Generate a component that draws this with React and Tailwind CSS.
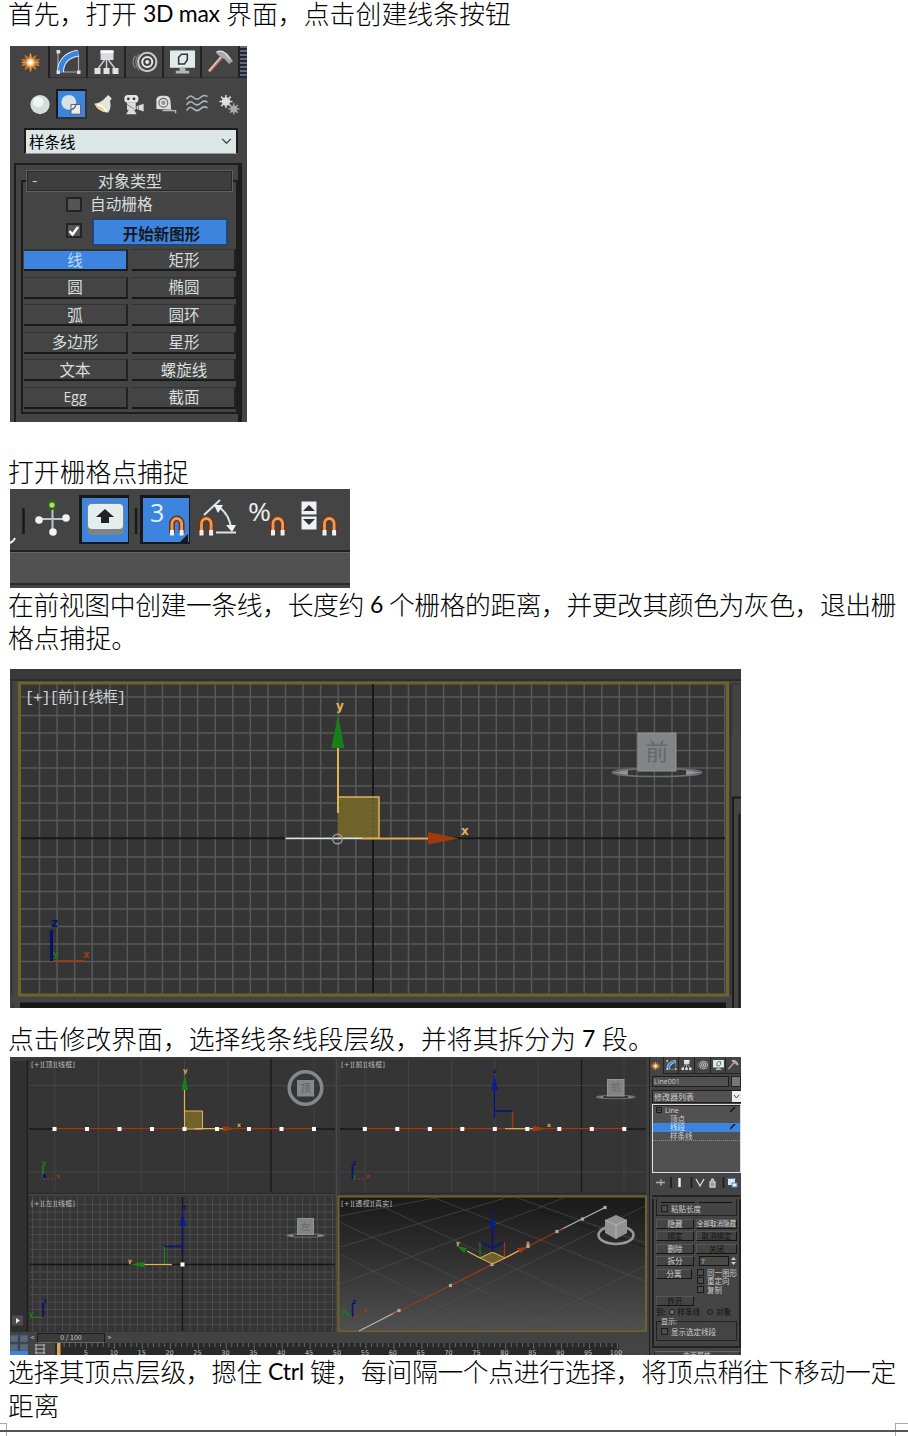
import React from "react";

const BLUE = "#3d84de";

function Line({ parts, className = "" }) {
  return (
    <p className={`flex shrink-0 items-center whitespace-pre pb-[4px] pl-2 text-[25.8px] font-light leading-none text-black ${className}`}>
      {parts.map(([text, width], i) => (
        <span
          key={i}
          className="flex shrink-0 justify-between"
          style={{ width }}
        >
          {/[0-9a-zA-Z]/.test(text) ? (
            <span className="pl-[6px] pt-px font-['Lato'] text-[23px] font-normal tracking-[-0.3px]">{text}</span>
          ) : (
            <span style={{ letterSpacing: width / text.length - 25.8 }}>{text}</span>
          )}
        </span>
      ))}
    </p>
  );
}

/* ---------- icons ---------- */

function Burst() {
  return (
    <svg viewBox="0 0 24 24" className="h-full w-full">
      <path d="M12 2l1.600 5L18 4l-1.500 5L22 8.500 18 12l4 3.500-5.500-.5L18 20l-4.400-3L12 22l-1.600-5L6 20l1.500-5L2 15.500 6 12 2 8.500 7.500 9 6 4l4.400 3z" fill="#cf7a28" stroke="#cf7a28" />
      <path d="M12 2v20M2 12h20" stroke="#e39b51" strokeWidth="1.500" />
      <circle cx="12" cy="12" r="4.500" fill="#f3cf8a" />
      <circle cx="12" cy="12" r="2.500" fill="#fff" />
    </svg>
  );
}
function Bend() {
  return (
    <svg viewBox="0 0 24 24" className="h-full w-full">
      <path d="M1.500 2v20H22M1.500 2l3 0M22 22V4" fill="none" stroke="#aaa" strokeWidth="1.200" />
      <path d="M4 22C4 12 10 5 22 3" fill="none" stroke="#dceeff" strokeWidth="7" />
      <path d="M4 22C4 12 10 5 22 3" fill="none" stroke={BLUE} strokeWidth="5" />
      <path d="M0 0h3.500v3.500H0zM0 20.500h3.500V24H0zM20.500 20.500H24V24h-3.500z" fill="#ddd" />
    </svg>
  );
}
function Hierarchy() {
  return (
    <svg viewBox="0 0 24 24" className="h-full w-full">
      <path d="M12 10v8M10 10l-6 8M14 10l6 8" stroke="#ccc" strokeWidth="1.500" />
      <path d="M6 0h13v10H6z" fill="#d9dddd" />
      <path d="M6 2h13" stroke="#fff" strokeWidth="2" />
      <path d="M0 18h6v6H0zM9 18h6v6H9zM18 18h6v6h-6z" fill="#e2e2e2" />
    </svg>
  );
}
function Motion() {
  return (
    <svg viewBox="0 0 28 24" className="h-full w-full" fill="none" stroke="#ccc">
      <circle cx="17" cy="12" r="10" strokeWidth="2.200" />
      <circle cx="17" cy="12" r="5.500" strokeWidth="2.200" stroke="#e8e8e8" />
      <circle cx="17" cy="12" r="1.800" fill="#fff" />
      <path d="M8 3q-7 9 0 18M4 5q-5 7 0 14" strokeWidth="1.200" stroke="#8c8c8c" />
    </svg>
  );
}
function Display() {
  return (
    <svg viewBox="0 0 26 24" className="h-full w-full">
      <path d="M0 0h26v18H0z" fill="#e0ecec" />
      <path d="M9 7l3-3h6v6l-3 4H9z" fill="none" stroke="#333" strokeWidth="1.600" />
      <path d="M10 18h6v3h4v3H6v-3h4z" fill="#b5b5b5" />
    </svg>
  );
}
function Hammer() {
  return (
    <svg viewBox="0 0 26 24" className="h-full w-full">
      <path d="M1 22L15 6" stroke="#c98672" strokeWidth="3" />
      <path d="M1 21L14 6" stroke="#f0d2c8" strokeWidth="1.200" />
      <path d="M8 2q5-4 12 1l6 8-4 3-5-5-4-2z" fill="#a4a8a8" />
      <path d="M9 1.500q5-2 9 1.500l5 6" fill="none" stroke="#e4e4e4" strokeWidth="1.200" />
    </svg>
  );
}
function Sphere() {
  return (
    <svg viewBox="0 0 24 24" className="h-full w-full">
      <circle cx="12" cy="12" r="11" fill="#d5dddb" />
      <circle cx="10" cy="9" r="6" fill="#eef6f4" />
    </svg>
  );
}
function Shapes() {
  return (
    <svg viewBox="0 0 24 24" className="h-full w-full">
      <circle cx="9.500" cy="9.500" r="8.500" fill="#d8e2e4" />
      <path d="M12 12h11v11H12z" fill="#e6eeee" stroke="#555" />
      <path d="M12 18a8.500 8.500 0 0 0 6-7" fill="none" stroke="#555" strokeWidth="1.300" />
    </svg>
  );
}
function Lamp() {
  return (
    <svg viewBox="0 0 24 24" className="h-full w-full">
      <path d="M18 1l4 4-2 3q2 8-2 13Q7 21 2 11q7 0 13-7z" fill="#e4e4df" />
      <path d="M3 11q4-1 9 3t5 7Q7 20 3 11z" fill="#f0cf91" />
      <path d="M5 12q7 1 11 8" fill="none" stroke="#fff" strokeWidth="2" />
    </svg>
  );
}
function Camera() {
  return (
    <svg viewBox="0 0 24 24" className="h-full w-full">
      <rect x="1" y="1" width="16" height="9" rx="4" fill="#e6e6e6" />
      <path d="M4 10h10v8H4zM15 14l8-3v9l-8-3zM6 18h6l3 5H3z" fill="#dcdcdc" />
      <circle cx="5.500" cy="5.500" r="1.600" fill="#333" />
      <circle cx="12" cy="5.500" r="1.600" fill="#333" />
      <path d="M4 12l8 5M17 13v5" stroke="#777" />
    </svg>
  );
}
function Tape() {
  return (
    <svg viewBox="0 0 24 24" className="h-full w-full">
      <path d="M1 17V6q1-4 6-4h4q5 0 6 5l1 11z" fill="#ddd" />
      <circle cx="9" cy="10" r="5" fill="none" stroke="#666" strokeWidth="1.200" />
      <circle cx="9" cy="10" r="2.500" fill="#999" />
      <path d="M8 19h15v3" fill="none" stroke="#bbb" strokeWidth="1.500" />
    </svg>
  );
}
function Waves() {
  return (
    <svg viewBox="0 0 24 24" className="h-full w-full" fill="none" stroke="#a9b4b4" strokeWidth="1.800">
      <path d="M0 6q4-6 8-2t8 0 8-1M0 12.500q4-6 8-2t8 0 8-1M0 19q4-6 8-2t8 0 8-1" />
    </svg>
  );
}
function Gears() {
  return (
    <svg viewBox="0 0 24 24" className="h-full w-full">
      <circle cx="8.500" cy="8.500" r="4.800" fill="#dedede" />
      <path d="M8.500 1v15M1 8.500h15M3 3l11 11M14 3L3 14" stroke="#dedede" strokeWidth="1.700" />
      <circle cx="17.500" cy="17" r="4" fill="#aaa" />
      <path d="M17.500 10.500v13M11 17h13M13 12.500l9 9M22 12.500l-9 9" stroke="#aaa" strokeWidth="1.500" />
    </svg>
  );
}
const tabs = [Burst, Bend, Hierarchy, Motion, Display, Hammer];

/* ---------- create panel ---------- */

function CreatePanel() {
  const cats = [Sphere, Shapes, Lamp, Camera, Tape, Waves, Gears];
  const types = ["线", "矩形", "圆", "椭圆", "弧", "圆环", "多边形", "星形", "文本", "螺旋线", "Egg", "截面"];
  return (
    <section className="ml-[10px] flex h-[376px] w-[237px] shrink-0 flex-col overflow-hidden bg-[#444] text-[15.500px] leading-none text-[#d6dede]">
      <div className="flex h-8 shrink-0">
        {tabs.map((Icon, i) => (
          <div
            key={i}
            className={`flex h-8 shrink-0 items-center justify-center border-r-2 border-r-[#222] ${i ? "w-[38px] border-b border-b-[#333]" : "w-[40px] pl-[2px]"}`}
          >
            <span className={i === 0 ? "h-[21px] w-[21px]" : i === 3 ? "h-[22px] w-[27px]" : "h-6 w-[25px]"}><Icon /></span>
          </div>
        ))}
        <div className="h-8 w-2 bg-[repeating-linear-gradient(#667,#667_2px,#202838_2px,#202838_4px)]" />
      </div>
      <div className="mt-[10px] flex h-8 shrink-0 items-center pl-[14px]">
        {cats.map((Icon, i) => (
          <div
            key={i}
            className={`flex h-[30px] w-[31.500px] shrink-0 items-center justify-center ${i === 1 ? "border-2 border-[#191919] border-b-[#333] border-r-[#333] bg-[#3d84de]" : ""}`}
          >
            <span className="h-[21px] w-[22px]"><Icon /></span>
          </div>
        ))}
      </div>
      <div className="ml-[14px] mt-2 flex h-[26px] w-[214px] shrink-0 items-center justify-between border-2 border-b border-[#1b1b1b] border-b-[#999] bg-[#dbe7e7] pl-[3px] pr-[4px] text-black">
        <span>样条线</span>
        <svg viewBox="0 0 12 8" className="h-[7px] w-[11px]"><path d="M1 1l5 5 5-5" fill="none" stroke="#444" strokeWidth="1.500" /></svg>
      </div>
      <div className="ml-1 mt-[9px] flex h-[270px] w-[228px] shrink-0 flex-col border-2 border-b-0 border-[#1d1d1d] border-r-4 pl-[5px] pt-[5px]">
        <div className="flex h-[22px] shrink-0">
          <div className="mt-[10px] h-3 w-[5px] border-l-2 border-t-2 border-[#1d1d1d]" />
          <div className="flex w-[207px] items-center border border-[#606060] bg-[#3e3e3e] pb-[2px] outline outline-1 -outline-offset-2 outline-[#292929]">
            <span className="w-[22px] pl-[5px] text-[#ccc]">-</span>
            <span className="w-[162px] text-center text-[16px]">对象类型</span>
          </div>
          <div className="mt-[10px] h-3 w-[5px] border-r-2 border-t-2 border-[#1d1d1d]" />
        </div>
        <div className="flex h-[222px] w-[217px] flex-col border-2 border-t-0 border-[#1d1d1d]">
          <div className="flex h-[24px] shrink-0 items-center pl-[43px]">
            <span className="h-[15px] w-[16px] border-2 border-[#242424] bg-[#555]" />
            <span className="ml-[8px] text-[15.700px]">自动栅格</span>
          </div>
          <div className="flex h-[31px] shrink-0 items-start pl-[43px] pt-[2px]">
            <span className="mt-[5px] flex h-[15px] w-[16px] items-center justify-center border-2 border-[#242424] bg-[#555]">
              <svg viewBox="0 0 12 12" className="h-3 w-3"><path d="M1.500 6l3 3.500L10 2" fill="none" stroke="#fff" strokeWidth="2.500" /></svg>
            </span>
            <span className="ml-[10px] flex h-[28px] w-[136px] items-center justify-center border-2 border-[#27466f] bg-[#3d84de] pl-[3px] pt-1 font-bold text-[#151a22]">开始新图形</span>
          </div>
          <div className="grid grid-cols-2 gap-x-[4px] gap-y-[5.500px] pl-px pt-[2px]">
            {types.map((t, i) => (
              <span
                key={t}
                className={`flex h-[22px] items-center justify-center border-b-2 border-r-2 border-t border-b-[#191919] border-r-[#222] border-t-[#333] ${i % 2 ? "pl-[2px]" : ""} ${i ? "bg-[#444]" : "border-t-2 bg-[#3d84de] text-[#b9d9f5]"} ${t === "Egg" ? "font-['Open_Sans'] text-[14px]" : ""}`}
              >
                {t}
              </span>
            ))}
          </div>
        </div>
      </div>
    </section>
  );
}

/* ---------- snap toolbar ---------- */

function Magnet({ x, y }) {
  return (
    <g transform={`translate(${x} ${y})`} fill="none">
      <path d="M3.500 17V7.500a4.800 5 0 0 1 9.600 0V17" stroke="#7a2f10" strokeWidth="6" />
      <path d="M3.500 14V7.500a4.800 5 0 0 1 9.600 0V14" stroke="#e0a060" strokeWidth="2.800" />
      <path d="M3.500 14v5.500M13.100 14v5.500" stroke="#e9f1f1" strokeWidth="4" />
    </g>
  );
}

function SnapToolbar() {
  return (
    <section className="ml-[10px] flex h-[99px] w-[340px] shrink-0 flex-col bg-[#444]">
      <svg viewBox="10 489 340 61" className="h-[61px] w-[340px] shrink-0">
        <path d="M10 543q4-2 5-5" stroke="#eee" strokeWidth="2" fill="none" />
        <path d="M23.500 508v26M136 508v26" stroke="#191919" strokeWidth="2.500" />
        <path d="M39 519h28M52.500 505v27" stroke="#bcc5c5" strokeWidth="2" />
        <g fill="#eef4f4"><circle cx="39" cy="520" r="3.800" /><circle cx="66" cy="518" r="3.800" /><circle cx="53" cy="532" r="3.800" /></g>
        <circle cx="52" cy="505" r="3.800" fill="#e8c46b" stroke="#157018" strokeWidth="2.400" />
        <path d="M79 495h50v49H79z" fill="#191919" /><path d="M82 498h46v44H82z" fill="#3d84de" />
        <rect x="87" y="503" width="37" height="32" rx="5" fill="#7c8588" />
        <rect x="88" y="504" width="35" height="25" rx="4" fill="#e5eeee" />
        <path d="M105 509l9 8h-5v6h-8v-6h-5z" fill="#222" />
        <path d="M140 495h50v49h-50z" fill="#191919" /><path d="M143 498h46v44h-46z" fill="#3d84de" />
        <text x="150" y="522" fontSize="25" fill="#e2f1ff" fontFamily="Open Sans">3</text>
        <Magnet x="168.500" y="516" />
        <path d="M188 534v8h-8z" fill="#191919" />
        <Magnet x="198" y="516" />
        <path d="M204 515l16-15M216 532.500h20M219 507q11 8 12 22" fill="none" stroke="#dce5e5" strokeWidth="2" />
        <path d="M214 505l9 0-5 8zM226 525l10 0-4 7z" fill="#eef5f5" />
        <text x="248" y="521" fontSize="25" fill="#e8efef" fontFamily="Open Sans" textLength="23" lengthAdjust="spacingAndGlyphs">%</text>
        <Magnet x="269.500" y="516" />
        <path d="M301.500 501.500h15v13h-15zM301.500 516.500h15v13h-15z" fill="#eef2f2" />
        <path d="M303 511l6-6 6 6zM303 519h12l-6 6z" fill="#333" />
        <Magnet x="321" y="516" />
      </svg>
      <div className="h-[33px] border-t-2 border-[#202020] bg-[#515151] shadow-[inset_0_1px_#666]" />
      <div className="h-[2px] bg-[#2a2a2a]" />
    </section>
  );
}

/* ---------- viewport drawings ---------- */

function range(start, step, end) {
  const out = [];
  for (let v = start; v <= end; v += step) out.push(v);
  return out;
}
function Grid({ xs, ys, x0, x1, y0, y1, stroke, width = 1 }) {
  return (
    <path
      d={xs.map((x) => `M${x} ${y0}V${y1}`).join("") + ys.map((y) => `M${x0} ${y}H${x1}`).join("")}
      stroke={stroke}
      strokeWidth={width}
      fill="none"
    />
  );
}
function Label({ x, y, size = 7, fill = "#bbb", children, w }) {
  return (
    <text x={x} y={y} fontSize={size} fill={fill} fontWeight={w ? 400 : 700} fontFamily="DejaVu Sans, Noto Sans CJK SC, sans-serif" textLength={w}>
      {children}
    </text>
  );
}
function Cube({ x, y, s, face = "前" }) {
  const cx = x + s / 2;
  const cy = y + s + (s > 20 ? 1.5 : 1);
  const rx = s * 1.180;
  const ry = s > 20 ? 4 : 1.8;
  return (
    <g>
      <ellipse cx={cx} cy={cy} rx={rx} ry={ry} fill="none" stroke="#6c6f70" strokeWidth={s > 20 ? 1.5 : 1} />
      <path d={`M${cx - rx} ${cy}l${rx * 0.350}-${ry * 0.600}v${ry * 1.300}zM${cx + rx} ${cy}l-${rx * 0.350}-${ry * 0.600}v${ry * 1.300}z`} fill="#909394" />
      <rect x={x} y={y} width={s} height={s} fill="#828486" stroke="#929597" />
      <text x={cx} y={y + s * 0.700} textAnchor="middle" fontSize={s * 0.600} fill="#66686a" fontFamily="Noto Sans CJK SC">{face}</text>
    </g>
  );
}

function FrontViewport() {
  return (
    <svg viewBox="10 669 731 339" className="ml-[10px] mt-[14px] h-[339px] w-[731px] shrink-0">
      <path d="M10 669h731v339H10z" fill="#444" />
      <path d="M10 669h731v10H10z" fill="#393939" />
      <path d="M10 680h731" stroke="#242424" strokeWidth="1.500" />
      <path d="M11.500 682v313M13 1003v5M730.500 684v311" stroke="#303030" strokeWidth="1.500" />
      <path d="M20 1002.500h706v6H20z" fill="#171717" />
      <path d="M19.500 683h708v312h-708z" fill="#353535" stroke="#6f622b" strokeWidth="3" />
      <Grid xs={range(39.500, 17.570, 725)} ys={[697, 715.5, 733, 750.5, 768, 786, 803, 820.5, 857, 874, 891.5, 909, 926.5, 944, 961.5, 979]} x0={21} x1={725} y0={684} y1={993} stroke="#585858" width={1.500} />
      <path d="M21 838.300H725M373 684V993" stroke="#181818" strokeWidth="2" />
      <text x="25" y="702" fontSize="15" fill="#cfd3d3" fontFamily="Liberation Mono, Noto Sans CJK SC, monospace" textLength="101">[+][前][线框]</text>
      <path d="M338 797h41v41h-41z" fill="#6f622b" />
      <path d="M338 797h41v41" fill="none" stroke="#e3b35a" strokeWidth="1.500" />
      <path d="M373 798v40" stroke="#3d5022" strokeDasharray="2 2" />
      <path d="M338 813V747M362 838.500h67" stroke="#e3b35a" strokeWidth="2" />
      <path d="M285.500 838.300H362" stroke="#dfe5e5" strokeWidth="1.800" />
      <path d="M338 715l6.300 33h-13z" fill="#198019" />
      <path d="M428 832l31 6.500-31 6z" fill="#a03a0c" />
      <circle cx="337.500" cy="839" r="4.800" fill="none" stroke="#9a9a9a" strokeWidth="1.500" />
      <Label x={336} y={710} size={12} fill="#e3b35a">y</Label>
      <Label x={461} y={835} size={12} fill="#e3b35a">x</Label>
      <path d="M51.500 930v31" stroke="#08126c" strokeWidth="3" />
      <path d="M53 960.800h31" stroke="#a03a0c" strokeWidth="1.500" />
      <Label x={51} y={927} size={12} fill="#08126c">z</Label>
      <Label x={83} y={958} size={10} fill="#a03a0c">x</Label>
      <Label x={53} y={957} size={9} fill="#198019">y</Label>
      <Cube x={638} y={733} s={38} />
      <path d="M732 684h9v51M732 684v51" stroke="#333" fill="none" />
      <path d="M733 1008V797.500h8M739.500 1008V814" stroke="#1b1b1b" strokeWidth="2" fill="none" />
    </svg>
  );
}

function Dots({ pts, fill = "#fff", s = 4 }) {
  return pts.map(([x, y]) => <rect key={x} x={x - s / 2} y={y - s / 2} width={s} height={s} fill={fill} />);
}

function QuadViewports() {
  const left = [54.5, 87, 119.5, 152, 184.5, 217, 249, 281.5, 314].map((x) => [x, 1129]);
  const right = left.map(([x, y]) => [x + 310.3, y]);
  return (
    <svg viewBox="10 1057 639 275" className="h-[275px] w-[639px] shrink-0">
      <defs>
        <linearGradient id="floor" x1="0" y1="0" x2="0" y2="1">
          <stop offset="0" stopColor="#191919" />
          <stop offset="0.450" stopColor="#303030" />
          <stop offset="1" stopColor="#505050" />
        </linearGradient>
      </defs>
      <path d="M10 1057h639v275H10z" fill="#3b3b3b" />
      <path d="M11 1061h16v271H11z" fill="#303030" />
      <path d="M27.500 1060v272" stroke="#1e1e1e" strokeWidth="1.500" />
      <path d="M29 1059h306v134H29zM340 1059h306v134H340zM29 1197h306v135H29z" fill="#353535" />
      <path d="M29 1194.500h306M336.500 1059v272M648 1057v275" stroke="#484848" />
      <path d="M28 1193.500h307M340 1193.500h306" stroke="#252525" />

      <Grid xs={[55, 98.5, 141, 184.5, 228, 314]} ys={[1085.500, 1172]} x0={29} x1={335} y0={1059} y1={1192} stroke="#444" />
      <path d="M29 1129h306M271 1059v133M340 1129h306M581.500 1059v133" stroke="#171717" strokeWidth="1.300" />
      <Label x={31} y={1067} w={44}>[+][顶][线框]</Label>
      <path d="M54 1128.700h260" stroke="#a03a0c" strokeWidth="1.400" />
      <path d="M184.500 1111h18v18h-18z" fill="#6f622b" stroke="#e3b35a" />
      <path d="M184.500 1118v-29M195 1128.700h28" stroke="#e3b35a" strokeWidth="1.200" />
      <path d="M184.800 1074l3.200 16h-6.400z" fill="#198019" />
      <path d="M223 1126l13 2.700-13 2.800z" fill="#a03a0c" />
      <Label x={183} y={1073} fill="#e3b35a">y</Label>
      <Label x={237} y={1127} size={6} fill="#e3b35a">x</Label>
      <Dots pts={left} />
      <circle cx="305.500" cy="1088" r="16.300" fill="none" stroke="#85888a" strokeWidth="3.500" />
      <path d="M297 1080h17v16.500h-17z" fill="#85888a" />
      <text x="305.500" y="1092" fontSize="10" textAnchor="middle" fill="#5d5d5d" fontFamily="Noto Sans CJK SC">顶</text>
      <path d="M43 1165v13" stroke="#198019" strokeWidth="1.500" /><path d="M43 1179h12" stroke="#a03a0c" strokeDasharray="2 2" />
      <Label x={42} y={1165} fill="#198019">y</Label><Label x={56} y={1178} size={6} fill="#a03a0c">x</Label><path d="M43 1174h3v4h-3z" fill="#08127c" />

      <Grid xs={[365, 408.5, 451.5, 495, 538, 624]} ys={[1085.500, 1172]} x0={340} x1={646} y0={1059} y1={1192} stroke="#444" />
      <Label x={341} y={1067} w={44}>[+][前][线框]</Label>
      <path d="M365 1128.700h259M512.500 1129v-18" stroke="#a03a0c" strokeWidth="1.400" />
      <path d="M494.500 1118v-29M494.500 1111h18" stroke="#08127c" strokeWidth="1.400" />
      <path d="M494.500 1075l3.200 15h-6.400z" fill="#0a1c94" />
      <path d="M505 1128.700h28" stroke="#e3b35a" strokeWidth="1.200" />
      <path d="M533 1126l14 2.700-14 2.800z" fill="#a03a0c" />
      <Label x={493} y={1073} fill="#08127c">z</Label><Label x={547} y={1127} size={6} fill="#e3b35a">x</Label>
      <Dots pts={right} />
      <Cube x={607.500} y={1079.500} s={16.500} />
      <path d="M352.500 1165v14" stroke="#08127c" strokeWidth="1.800" /><path d="M354 1179h12" stroke="#a03a0c" strokeDasharray="2 2" />
      <Label x={352} y={1165} fill="#08127c">z</Label><Label x={366} y={1178} size={6} fill="#a03a0c">x</Label><Label x={353} y={1178} size={5} fill="#198019">y</Label>

      <Grid xs={range(32.500, 7.500, 335)} ys={range(1204.500, 7.500, 1330)} x0={30} x1={335} y0={1197} y1={1331} stroke="#4c4c4c" />
      <path d="M29 1264.500h306M182.500 1197v134" stroke="#171717" strokeWidth="1.300" />
      <Label x={31} y={1205.500} w={44}>[+][左][线框]</Label>
      <path d="M182.500 1253v-28M182.500 1246.500h-18" stroke="#08127c" strokeWidth="1.400" />
      <path d="M182.500 1211l3 15h-6z" fill="#0a1c94" />
      <path d="M164.500 1247v17" stroke="#198019" strokeWidth="1.400" /><path d="M144 1264.500h28" stroke="#e3b35a" strokeWidth="1.300" />
      <path d="M129.500 1264.500l15-2.700v5.400z" fill="#198019" />
      <Label x={128} y={1263} size={6} fill="#e3b35a">y</Label><Label x={182} y={1209} fill="#08127c">z</Label>
      <Dots pts={[[182.5, 1264.5]]} />
      <Cube x={297.500} y={1218.500} s={16} face="左" />
      <path d="M43 1303v14" stroke="#08127c" strokeWidth="1.800" /><path d="M31 1317.500h12" stroke="#198019" />
      <Label x={43} y={1303} fill="#08127c">z</Label><Label x={29} y={1316} fill="#198019">y</Label>
      <path d="M12 1315.500h11v10H12z" fill="#4c4c4c" /><path d="M16 1318l4 2.500-4 3z" fill="#eee" />

      <path d="M338.500 1196.500h307.500v135H338.500z" fill="url(#floor)" stroke="#6f622b" strokeWidth="2" />
      <path d="M340 1216l100-19M340 1247l165-49M340 1284L564 1198M392 1331L645 1206M515 1331l130-65M340 1222l226 109M366 1199L645 1329M432 1197l213 84M515 1197l130 46M340 1254l150 77" stroke="#555" strokeWidth=".8" fill="none" opacity=".7" />
      <path d="M525 1205l120 42" stroke="#191919" />
      <Label x={341} y={1205.500} w={51}>[+][透视][真实]</Label>
      <path d="M359 1331L400 1310M560 1230l45-22.500" stroke="#b4b4b4" strokeWidth="1.300" />
      <path d="M393 1314l57.500-28.500L492 1264.500l36-18 35-18" fill="none" stroke="#a03a0c" strokeWidth="1.300" />
      <path d="M480 1258l12.500-6 12.500 6-12.500 6z" fill="#6f622b" stroke="#e3b35a" />
      <path d="M467 1251l13 7M505 1258l15-8" stroke="#e3b35a" strokeWidth="1.300" />
      <path d="M492.500 1252v-26M480 1242l12.500 6 12-6" stroke="#08127c" strokeWidth="1.400" fill="none" />
      <path d="M492.500 1214l3 14h-6z" fill="#0a1c94" />
      <path d="M480 1242v15" stroke="#198019" strokeWidth="1.200" /><path d="M504.500 1242v15" stroke="#a03a0c" strokeWidth="1.300" />
      <path d="M457 1246l10 2-3 5z" fill="#198019" /><path d="M527 1247l-10 1 4 5z" fill="#a03a0c" />
      <Label x={456} y={1245} size={6} fill="#e3b35a">y</Label><Label x={526} y={1245} size={6} fill="#e3b35a">x</Label><Label x={491} y={1212} size={6} fill="#08127c">z</Label>
      <Dots s={3.200} fill="#aaa" pts={[[399, 1310.5], [450.5, 1285.5], [492, 1264.5], [528, 1246.5], [557, 1231.5], [582.5, 1219], [605, 1207.5]]} />
      <ellipse cx="616" cy="1235" rx="17.500" ry="9" fill="none" stroke="#999" strokeWidth="2.600" />
      <path d="M605 1220l11-5 11 5v13l-11 6-11-6z" fill="#929292" /><path d="M605 1220l11 5 11-5M616 1225v14" fill="none" stroke="#b3b3b3" />
      <path d="M352.500 1303v14" stroke="#08127c" strokeWidth="1.600" /><path d="M345 1311l3 4 4 2" stroke="#198019" fill="none" strokeWidth="1.300" /><path d="M353 1317q7 0 11-6" stroke="#a03a0c" fill="none" strokeDasharray="2 1" />
      <Label x={352} y={1304} fill="#08127c">z</Label><Label x={342} y={1313} size={6} fill="#198019">y</Label><Label x={363} y={1312} size={6} fill="#a03a0c">x</Label>
    </svg>
  );
}

function Timeline() {
  return (
    <div className="flex h-[23px] shrink-0">
      <div className="grid h-[23px] w-[18px] shrink-0 grid-cols-2 gap-[2px] border-b-4 border-b-[#3d84de] bg-[#444] pt-[3px]">
        {[0, 1, 2, 3].map((i) => <span key={i} className="border border-[#35639b] bg-[#666]" />)}
      </div>
      <div className="flex w-[621px] flex-col">
        <div className="flex h-[11px] items-center bg-[#424242] text-[7px] leading-none text-[#ccc]">
          <span className="w-[9px] text-center">&lt;</span>
          <span className="flex h-[10px] w-[68px] items-center justify-center border border-[#1c1c1c] border-b-[#666] bg-[#3b3b3b]">0 / 100</span>
          <span className="w-[9px] text-center">&gt;</span>
        </div>
        <svg viewBox="28 1343 621 12" className="h-3 w-[621px]">
          <path d="M28 1343h621v12H28z" fill="#292929" />
          <path d="M28 1343h27v12H28zM619 1343h30v12h-30z" fill="#444" />
          <path d="M35 1345h10M35 1349h10M35 1353h10M36 1344v10M44 1344v10" stroke="#bbb" fill="none" />
          <path d={range(58.500, 5.590, 619).map((x, i) => `M${x} 1343v${i % 5 ? 4 : 6}`).join("")} stroke="#666" />
          <path d="M57 1343h3.500v12H57z" fill="#d7a84f" />
          {range(1, 1, 20).map((i) => (
            <text key={i} x={58 + i * 27.900} y={1354.500} textAnchor="middle" fontSize="6.500" fill="#c4c4c4" fontFamily="DejaVu Sans">{i * 5}</text>
          ))}
        </svg>
      </div>
    </div>
  );
}

/* ---------- modify panel ---------- */

function Btn({ children, dim = false }) {
  return (
    <span className={`flex h-[10px] flex-1 items-center justify-center whitespace-nowrap border border-[#575757] border-b-[#151515] border-r-[#151515] ${dim ? "text-[#111]" : "text-[#d4d4d4]"} ${children.length > 4 ? "text-[6.500px]" : "text-[7.500px]"}`}>
      {children}
    </span>
  );
}
function Check({ children }) {
  return (
    <span className="flex items-center gap-[3px] whitespace-nowrap text-[7.500px]">
      <span className="h-[7px] w-[7px] border border-[#1c1c1c] bg-[#4c4c4c]" />
      {children}
    </span>
  );
}

function ModifyPanel() {
  return (
    <aside className="flex h-[298px] w-[92px] shrink-0 flex-col overflow-hidden border-l border-[#222] bg-[#444] pl-[2px] text-[8px] leading-none text-[#ccc]">
      <div className="flex h-[17px] shrink-0">
        {tabs.map((Icon, i) => (
          <span key={i} className={`flex w-[15.700px] shrink-0 items-center justify-center border-r border-[#222] ${i ? "border-b" : "-ml-[4px]"}`}>
            <span className="h-[10px] w-[11px]"><Icon /></span>
          </span>
        ))}
      </div>
      <div className="mt-[2px] flex h-[11px] shrink-0 gap-[2px]">
        <span className="flex w-[79px] items-center border border-[#1c1c1c] bg-[#515151] pl-px font-['Open_Sans'] text-[7px]">Line001</span>
        <span className="w-[10px] border border-[#222] bg-[#777]" />
      </div>
      <div className="mt-[3px] flex h-[13px] shrink-0 items-center justify-between border border-r-0 border-[#1c1c1c] bg-[#515151] pl-px">
        <span>修改器列表</span>
        <svg viewBox="0 0 9 11" className="h-[11px] w-[9px] bg-[#e8eeee]"><path d="M2 4l2.500 3L7 4" fill="none" stroke="#444" /></svg>
      </div>
      <div className="mt-px flex h-[69px] w-[89px] shrink-0 flex-col border border-[#ddd] bg-[#515151] text-[7.500px]">
        <span className="flex h-[9px] items-center justify-between border-t border-[#222] pl-[3px] pr-[4px] font-['Open_Sans'] text-[7px]">
          <span className="flex items-center gap-[3px]">
            <svg viewBox="0 0 6 6" className="h-[6px] w-[6px]"><path d="M.5.5h5v5h-5zM1.500 3h3" fill="none" stroke="#191919" /></svg>
            <span className="text-[#e2cccc]">Line</span>
          </span>
          <svg viewBox="0 0 6 6" className="h-[6px] w-[6px]"><path d="M0 5l5-5" stroke="#111" strokeWidth="1.500" /></svg>
        </span>
        <span className="flex h-[8.500px] items-center pl-[17px]">顶点</span>
        <span className="flex h-[9px] items-center justify-between bg-[#3d84de] pl-[17px] pr-[4px] text-[#d6eaff]">
          线段
          <svg viewBox="0 0 6 6" className="h-[6px] w-[6px]"><path d="M0 5l5-5" stroke="#111" strokeWidth="1.500" /></svg>
        </span>
        <span className="flex h-[9px] items-center border-b border-dotted border-[#888] pl-[17px]">样条线</span>
      </div>
      <svg viewBox="651 1172 90 22" className="h-[22px] w-[90px] shrink-0">
        <path d="M655 1181.500h9M660 1178.500v6" stroke="#aaa" strokeWidth="1.500" /><path d="M670 1176v11M690.500 1176v11M722.500 1176v11" stroke="#191919" strokeWidth="1.500" />
        <path d="M678.500 1177v9" stroke="#eee" strokeWidth="2.500" /><path d="M695 1178l4 7 4-7" fill="none" stroke="#ddd" strokeWidth="1.300" />
        <path d="M709 1181h5v5h-5zM710 1180q1.500-4 3 0" fill="#999" stroke="#ccc" strokeWidth="1.300" />
        <path d="M727 1177h7v7h-7z" fill="#dfe6e6" /><path d="M726 1177.500h9M731 1182h5v4h-5z" stroke={BLUE} fill="#eee" />
      </svg>
      <div className="h-[4px] shrink-0 border-t-2 border-[#242424]" />
      <div className="flex h-[149px] w-[89px] shrink-0 flex-col border-2 border-t-0 border-[#222] px-[2px]">
        <div className="flex h-[17px] shrink-0 flex-col border border-t-0 border-[#222] pl-[4px]">
          <div className="mb-[2px] flex h-[4px] shrink-0 gap-1 pr-1"><span className="flex-1 border-b border-[#111]" /><span className="flex-1 border-b border-[#111]" /></div>
          <Check>粘贴长度</Check>
        </div>
        {[["隐藏", "全部取消隐藏", false, false], ["绑定", "取消绑定", true, true], ["删除", "关闭", false, true]].map(([a, b, da, db]) => (
          <div key={a} className="mt-[2.500px] grid h-[10px] shrink-0 grid-cols-[38px_41px] gap-[2px]">
            <Btn dim={da}>{a}</Btn><Btn dim={db}>{b}</Btn>
          </div>
        ))}
        <div className="mt-[2.500px] flex h-[10px] shrink-0 gap-[5px]">
          <span className="flex w-[38px]"><Btn>拆分</Btn></span>
          <span className="flex w-[30px] items-center border border-[#151515] bg-[#4a4a4a] pl-px text-[7px] text-[#e5a0a0]">7</span>
          <svg viewBox="0 0 5 10" className="-ml-[3px] h-[10px] w-[5px]"><path d="M0 4l2.500-3L5 4zM0 6h5L2.500 9z" fill="#ccc" /></svg>
        </div>
        <div className="mt-[2.500px] flex h-[27px] shrink-0 gap-[5px]">
          <span className="flex h-[10px] w-[38px]"><Btn>分离</Btn></span>
          <span className="flex flex-col gap-[1px]"><Check>同一图形</Check><Check>重定向</Check><Check>复制</Check></span>
        </div>
        <span className="flex h-[10px] w-[38px] shrink-0"><Btn dim>炸开</Btn></span>
        <div className="flex h-[12px] shrink-0 items-center gap-[3px] whitespace-nowrap text-[7.500px] text-[#111]">
          <span>到:</span><span className="h-[6px] w-[6px] rounded-full border border-[#191919] bg-[#777]" /><span>样条线</span>
          <span className="ml-[4px] h-[6px] w-[6px] rounded-full border border-[#191919]" /><span>对象</span>
        </div>
        <fieldset className="h-[23px] shrink-0 border border-[#222] pl-[4px]">
          <legend className="h-[7px] text-[7px] leading-[7px]">显示:</legend>
          <div className="mt-[3px]"><Check>显示选定线段</Check></div>
        </fieldset>
      </div>
      <div className="ml-[2px] mt-[3px] flex h-[10px] w-[86px] shrink-0 items-start justify-center border border-[#222] border-t-[#666] text-[7px]">曲面属性</div>
    </aside>
  );
}

export default function App() {
  return (
    <main className="flex h-[1436px] w-[908px] flex-col overflow-hidden bg-white font-['Noto_Sans_CJK_SC',sans-serif]">
      <Line className="mb-4 h-[30px]" parts={[["首先，打开", 129], ["3D max", 89], ["界面，点击创建线条按钮", 285]]} />
      <CreatePanel />
      <Line className="mt-[34px] h-[33px]" parts={[["打开栅格点捕捉", 181]]} />
      <SnapToolbar />
      <Line className="mt-[1px] h-[33px]" parts={[["在前视图中创建一条线，长度约", 356], ["6", 25], ["个栅格的距离，并更改其颜色为灰色，退出栅", 507]]} />
      <Line className="h-[33px]" parts={[["格点捕捉。", 129]]} />
      <FrontViewport />
      <Line className="mt-[14px] h-[35px]" parts={[["点击修改界面，选择线条线段层级，并将其拆分为", 568], ["7", 26], ["段。", 52]]} />
      <section className="ml-[10px] flex h-[298px] w-[731px] shrink-0 overflow-hidden bg-[#444]">
        <div className="flex w-[639px] shrink-0 flex-col">
          <QuadViewports />
          <Timeline />
        </div>
        <ModifyPanel />
      </section>
      <Line className="mt-[1px] h-[34px]" parts={[["选择其顶点层级，摁住", 254], ["Ctrl", 48], ["键，每间隔一个点进行选择，将顶点稍往下移动一定", 586]]} />
      <Line className="h-[33px]" parts={[["距离", 51]]} />
      <footer className="flex h-[13px] shrink-0 flex-col">
        <div className="flex h-[7px] justify-between">
          <span className="w-[7px] border-r border-t border-[#aaa]" />
          <span className="w-[13px] border-l border-t border-[#aaa]" />
        </div>
        <div className="h-[2px] bg-[#555]" />
        <div className="flex h-[4px] justify-between">
          <span className="w-[7px] border-r border-[#aaa]" />
          <span className="w-[13px] border-l border-[#aaa]" />
        </div>
      </footer>
    </main>
  );
}
